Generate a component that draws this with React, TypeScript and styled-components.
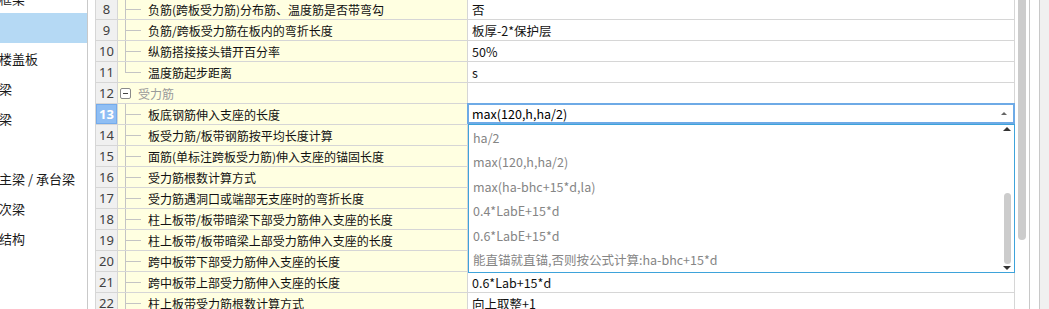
import React from 'react';
import styled, { createGlobalStyle } from 'styled-components';

const GlobalStyle = createGlobalStyle`
	body {
		margin: 0;
		overflow: hidden;
		background: #ffffff;
		font-family: 'Noto Sans CJK SC', 'Noto Sans', sans-serif;
	}
`;

// sidebar is scrolled horizontally, only the tail of each label shows
const sideItems = ['框架', '', '楼盖板', '梁', '梁', '', '主梁 / 承台梁', '次梁', '结构'];

interface IRow {
	no: number;
	name: string;
	value?: string;
	group?: boolean;
	last?: boolean;
	editing?: boolean;
}

const rows: IRow[] = [
	{ no: 8, name: '负筋(跨板受力筋)分布筋、温度筋是否带弯勾', value: '否' },
	{ no: 9, name: '负筋/跨板受力筋在板内的弯折长度', value: '板厚-2*保护层' },
	{ no: 10, name: '纵筋搭接接头错开百分率', value: '50%' },
	{ no: 11, name: '温度筋起步距离', value: 's', last: true },
	{ no: 12, name: '受力筋', group: true },
	{ no: 13, name: '板底钢筋伸入支座的长度', value: 'max(120,h,ha/2)', editing: true },
	{ no: 14, name: '板受力筋/板带钢筋按平均长度计算' },
	{ no: 15, name: '面筋(单标注跨板受力筋)伸入支座的锚固长度' },
	{ no: 16, name: '受力筋根数计算方式' },
	{ no: 17, name: '受力筋遇洞口或端部无支座时的弯折长度' },
	{ no: 18, name: '柱上板带/板带暗梁下部受力筋伸入支座的长度' },
	{ no: 19, name: '柱上板带/板带暗梁上部受力筋伸入支座的长度' },
	{ no: 20, name: '跨中板带下部受力筋伸入支座的长度' },
	{ no: 21, name: '跨中板带上部受力筋伸入支座的长度', value: '0.6*Lab+15*d' },
	{ no: 22, name: '柱上板带受力筋根数计算方式', value: '向上取整+1' },
];

const options = [
	'ha/2',
	'max(120,h,ha/2)',
	'max(ha-bhc+15*d,la)',
	'0.4*LabE+15*d',
	'0.6*LabE+15*d',
	'能直锚就直锚,否则按公式计算:ha-bhc+15*d',
];

const App = () => {
	return (
		<>
			<GlobalStyle />
			<Page>
				<Sidebar>
					<SideList>
						{sideItems.map((t, i) => (
							<SideItem key={i} $active={i === 1}>
								<SideText>{t}</SideText>
							</SideItem>
						))}
					</SideList>
				</Sidebar>
				<Grid>
					{rows.map((r) => (
						<Row key={r.no}>
							<NumCell $active={!!r.editing}>{r.no}</NumCell>
							<NameCell>
								{r.group ? (
									<>
										<GroupGutter>
											<MinusBox />
										</GroupGutter>
										<GroupText>{r.name}</GroupText>
									</>
								) : (
									<>
										<TreeGutter $last={!!r.last} />
										<NameText>{r.name}</NameText>
									</>
								)}
							</NameCell>
							<ValueCell $editing={!!r.editing}>
								{r.editing ? (
									<>
										<Editor>
											<EditorText>{r.value}</EditorText>
											<SmallArrow />
										</Editor>
										<DropList>
											{options.map((o) => (
												<DropItem key={o}>{o}</DropItem>
											))}
											<ListArrowUp />
											<ListThumb />
											<ListArrowDown />
										</DropList>
									</>
								) : (
									<ValueText>{r.value}</ValueText>
								)}
							</ValueCell>
						</Row>
					))}
				</Grid>
				<ScrollTrack>
					<ScrollThumb />
				</ScrollTrack>
				<Divider />
				<Spacer />
				<Divider />
				<RightPane />
			</Page>
		</>
	);
};

const Page = styled.div`
	display: flex;
	height: 309px;
	overflow: hidden;
	background: #ffffff;
`;

const Sidebar = styled.div`
	width: 87px;
	flex: none;
	border-right: 1px solid #c9c9c9;
	overflow: hidden;
`;

const SideList = styled.div`
	margin-top: -17px;
	display: flex;
	flex-direction: column;
`;

const SideItem = styled.div<{ $active: boolean }>`
	height: 30px;
	display: flex;
	align-items: center;
	background: ${(p) => (p.$active ? '#b5d9f4' : 'transparent')};
	overflow: hidden;
`;

const SideText = styled.span`
	font-size: 13px;
	color: #1a1a1a;
	white-space: nowrap;
	margin-left: -1px;
`;

const Grid = styled.div`
	width: 920px;
	flex: none;
	margin-left: 7px;
	margin-top: -1px;
	display: flex;
	flex-direction: column;
`;

const Row = styled.div`
	display: grid;
	grid-template-columns: 23px 350px 547px;
	height: 21px;
	flex: none;
`;

const NumCell = styled.div<{ $active: boolean }>`
	box-sizing: border-box;
	border-left: 1px solid #d6d6d6;
	border-right: 1px solid #d6d6d6;
	border-bottom: 1px solid #d6d6d6;
	background: ${(p) => (p.$active ? '#8fbef4' : '#f0f0f0')};
	box-shadow: ${(p) => (p.$active ? 'inset 0 0 0 1px #74abec' : 'none')};
	color: ${(p) => (p.$active ? '#ffffff' : '#404040')};
	font-weight: ${(p) => (p.$active ? 700 : 400)};
	font-family: 'Noto Sans', sans-serif;
	font-size: 13px;
	display: flex;
	align-items: center;
	justify-content: center;
`;

const NameCell = styled.div`
	box-sizing: border-box;
	border-right: 1px solid #d6d6d6;
	border-bottom: 1px solid #d6d6d6;
	background: #ffffe1;
	display: flex;
	align-items: center;
	overflow: hidden;
`;

const TreeGutter = styled.div<{ $last: boolean }>`
	position: relative;
	width: 28px;
	height: 100%;
	flex: none;
	&::before {
		content: '';
		position: absolute;
		left: 7px;
		top: 0;
		height: ${(p) => (p.$last ? '50%' : 'calc(100% + 1px)')};
		border-left: 1px solid #c4c4c4;
	}
	&::after {
		content: '';
		position: absolute;
		left: 7px;
		width: 16px;
		top: 50%;
		border-top: 1px solid #c4c4c4;
	}
`;

const GroupGutter = styled.div`
	width: 20px;
	height: 100%;
	flex: none;
	display: flex;
	align-items: center;
	padding-left: 2px;
	box-sizing: border-box;
`;

const MinusBox = styled.div`
	position: relative;
	width: 11px;
	height: 11px;
	box-sizing: border-box;
	border: 1px solid #8a8a8a;
	border-radius: 2px;
	background: #ffffff;
	&::after {
		content: '';
		position: absolute;
		left: 2px;
		right: 2px;
		top: 4px;
		border-top: 1px solid #444444;
	}
`;

const NameText = styled.span`
	font-size: 12px;
	color: #111111;
	white-space: nowrap;
	padding-left: 2px;
`;

const GroupText = styled.span`
	font-size: 12px;
	color: #9a9a9a;
	white-space: nowrap;
`;

const ValueCell = styled.div<{ $editing: boolean }>`
	position: relative;
	box-sizing: border-box;
	border-right: 1px solid #d6d6d6;
	border-bottom: 1px solid #d6d6d6;
	background: #ffffff;
	display: flex;
	align-items: center;
	z-index: ${(p) => (p.$editing ? 2 : 'auto')};
`;

const ValueText = styled.span`
	font-size: 12.5px;
	color: #111111;
	padding-left: 4px;
	white-space: nowrap;
`;

const Editor = styled.div`
	position: absolute;
	left: -1px;
	right: -1px;
	top: -1px;
	bottom: 0;
	box-sizing: border-box;
	border: 2px solid #6eaae6;
	background: #ffffff;
	display: flex;
	align-items: center;
`;

const EditorText = styled.span`
	font-size: 12.5px;
	color: #000000;
	padding-left: 3px;
	white-space: nowrap;
`;

const SmallArrow = styled.div`
	position: absolute;
	right: 6px;
	top: 7px;
	width: 0;
	height: 0;
	border-left: 3px solid transparent;
	border-right: 3px solid transparent;
	border-bottom: 3px solid #666666;
`;

const DropList = styled.div`
	position: absolute;
	left: 0;
	right: -1px;
	top: 100%;
	box-sizing: border-box;
	border: 1px solid #3ea3da;
	background: #ffffff;
	display: flex;
	flex-direction: column;
`;

const DropItem = styled.div`
	height: 24.5px;
	display: flex;
	align-items: center;
	padding-left: 4px;
	font-size: 12.5px;
	color: #858585;
	white-space: nowrap;
`;

const ListArrowUp = styled.div`
	position: absolute;
	right: 3px;
	top: 2px;
	width: 0;
	height: 0;
	border-left: 4px solid transparent;
	border-right: 4px solid transparent;
	border-bottom: 4px solid #333333;
`;

const ListThumb = styled.div`
	position: absolute;
	right: 3px;
	top: 68px;
	width: 7px;
	height: 71px;
	border-radius: 4px;
	background: #cccccc;
`;

const ListArrowDown = styled.div`
	position: absolute;
	right: 3px;
	bottom: 2px;
	width: 0;
	height: 0;
	border-left: 4px solid transparent;
	border-right: 4px solid transparent;
	border-top: 4px solid #333333;
`;

const ScrollTrack = styled.div`
	width: 14px;
	flex: none;
	padding-left: 3px;
	box-sizing: border-box;
	background: #ffffff;
`;

const ScrollThumb = styled.div`
	width: 8px;
	height: 240px;
	background: #cccccc;
	border-radius: 0 0 4px 4px;
`;

const Divider = styled.div`
	width: 1px;
	flex: none;
	background: #c8c8c8;
`;

const Spacer = styled.div`
	width: 9px;
	flex: none;
	background: #ffffff;
`;

const RightPane = styled.div`
	flex: 1;
	background: #f0f0f0;
`;

export default App;
